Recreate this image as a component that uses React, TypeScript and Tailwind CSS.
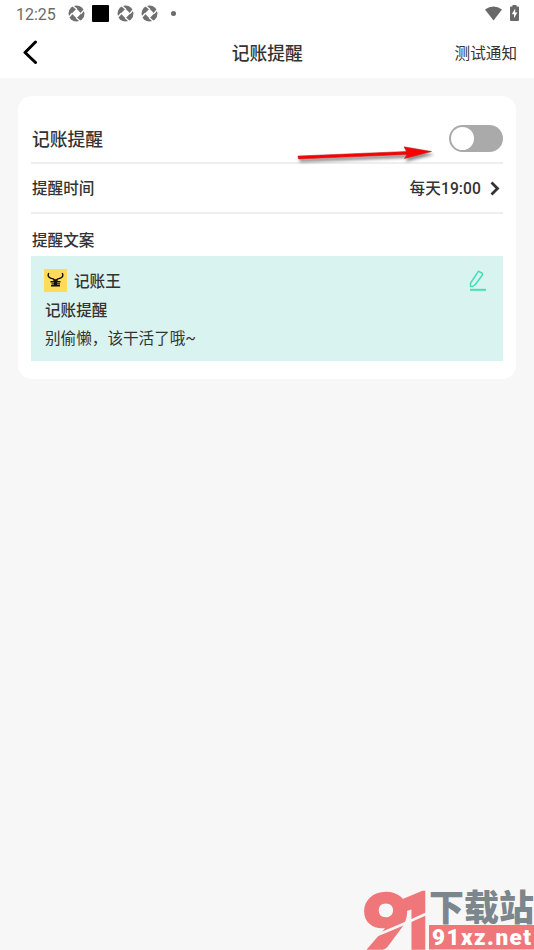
import React from "react";

function ShutterIcon() {
  return (
    <svg width="17" height="17" viewBox="0 0 17 17" className="shrink-0">
      <circle cx="8.5" cy="8.5" r="8" fill="#707070" />
      <path d="M8.500 3.800 13.200 8.500 8.500 13.200 3.800 8.500Z" fill="#fff" />
      <g stroke="#fff" strokeWidth="1.300">
        <path d="M8.800 4.300 5 1" />
        <path d="M12.700 8.800 16 5" />
        <path d="M8.200 12.700 12 16" />
        <path d="M4.300 8.200 1 12" />
      </g>
    </svg>
  );
}

function StatusBar() {
  return (
    <div className="flex h-7 items-center pl-4 pr-[15px]">
      <span className="w-[52px] pt-px font-[Roboto] text-[16px] leading-7 text-[#6b6b6b]">12:25</span>
      <span className="flex w-[17px] translate-y-[-1px]"><ShutterIcon /></span>
      <span className="ml-[7px] h-[17px] w-[17px] translate-y-[-1px] rounded-[1px] bg-black" />
      <span className="ml-2 flex translate-y-[-1px]"><ShutterIcon /></span>
      <span className="ml-[7px] flex translate-y-[-1px]"><ShutterIcon /></span>
      <span className="ml-[13px] h-[5px] w-[5px] translate-y-[-1px] rounded-full bg-[#6b6b6b]" />
      <svg width="17" height="15" viewBox="0 0 17 15" className="ml-auto translate-y-[-1px]">
        <path d="M0 3.500Q8.500-2.500 17 3.500L8.500 14.500Z" fill="#686868" />
      </svg>
      <svg width="9" height="16" viewBox="0 0 9 16" className="ml-2 translate-y-[-1px]">
        <path d="M2.500 1.500V0h4v1.500H8q1 0 1 1V15q0 1-1 1H1q-1 0-1-1V2.500q0-1 1-1Z" fill="#686868" />
        <path d="M5.200 3.500 1.800 9.300h2.200v4L7.300 7.500H5.200Z" fill="#fff" />
      </svg>
    </div>
  );
}

function AppLogo() {
  return (
    <svg width="23" height="23" viewBox="0 0 23 23" className="shrink-0">
      <rect width="23" height="23" fill="#ffdb5a" />
      <path d="M4.800 4C2.800 7.500 5.500 9.200 9 9.800L11.500 11.200 14 9.800C17.500 9.200 20.200 7.500 18.200 4" fill="none" stroke="#111" strokeWidth="1.300" />
      <path d="M9 9.500 11.500 10.700 14 9.500 13.500 12H16.500V13.600H6.500V12H9.500ZM7.500 14.200H16v1.400H7.500ZM7 16.100h9v1.500H7ZM10 12h3v5.500h-3Z" fill="#111" />
    </svg>
  );
}

function PencilIcon() {
  return (
    <svg width="18" height="22" viewBox="0 0 18 22" fill="none" stroke="#43dfb9" strokeWidth="1.500" className="mr-[16px] mt-[14px]">
      <path d="M9.500 1.200 13.500 3.500 13.200 5.300 6.200 14.700 3.500 16.500H1.500L1.600 13Z" strokeLinejoin="round" />
      <path d="M1 19.800H17" strokeWidth="2" />
    </svg>
  );
}

function RedArrow() {
  return (
    <svg width="150" height="30" viewBox="0 0 150 30" className="absolute left-[290px] top-[140px]">
      <defs>
        <filter id="shadow" x="-10%" y="-50%" width="120%" height="220%">
          <feDropShadow dx="1.500" dy="3" stdDeviation="1.500" floodColor="#000" floodOpacity="0.45" />
        </filter>
      </defs>
      <path d="M8 16 116.500 11.500 114 6.800 141.500 11.500 114.500 18.500 117 14.500 8.500 19Z" fill="#fb0505" stroke="#a61b1b" strokeWidth=".5" filter="url(#shadow)" />
    </svg>
  );
}

function SiteMark() {
  return (
    <svg width="171" height="62" viewBox="0 0 171 62" className="absolute bottom-0 right-0">
      <g fill="#ef777a" stroke="#ef777a" strokeWidth="3.500" fontWeight="900">
        <text x="0" y="60" fontSize="75" textLength="46" lengthAdjust="spacingAndGlyphs" fontFamily="Lato, sans-serif">9</text>
        <text x="34" y="60" fontSize="77" textLength="38" lengthAdjust="spacingAndGlyphs" fontFamily="Roboto, sans-serif">1</text>
      </g>
      <path d="M9 49Q30 41 65 25" fill="none" stroke="#f7f7f7" strokeWidth="2.500" />
      <rect x="66" y="37" width="105" height="24.500" fill="#ef777a" />
      <text x="66" y="33" fontSize="36" fontWeight="900" fill="#7b868d" textLength="105" lengthAdjust="spacingAndGlyphs" fontFamily="'Noto Sans CJK SC', sans-serif">下载站</text>
      <text x="69" y="57" fontSize="22.500" fontWeight="900" fill="#fff" textLength="99" fontFamily="Roboto, sans-serif">91xz.net</text>
    </svg>
  );
}

export default function App() {
  return (
    <div className="relative h-[950px] w-[534px] overflow-hidden bg-[#f7f7f7] font-[Roboto,'Noto_Sans_CJK_SC',sans-serif] text-[#333]">
      <header className="h-[78px] bg-white">
        <StatusBar />
        <div className="flex h-[50px] items-center justify-between pl-[22px] pr-[17px]">
          <svg width="58" height="24" viewBox="0 0 58 24" fill="none" stroke="#000" strokeWidth="3" strokeLinecap="round" strokeLinejoin="round" className="-mt-[3px]">
            <path d="M13.500 2 3 12.500 13.500 22.500" />
          </svg>
          <h1 className="pt-[3px] text-center text-[17.800px] font-medium">记账提醒</h1>
          <span className="pt-1 text-right text-[15.600px]">测试通知</span>
        </div>
      </header>
      <main className="mx-[18px] mt-[18px] h-[283px] w-[498px] rounded-[14px] bg-white px-[13px] text-[15.600px] font-medium">
        <div className="flex h-[68px] items-center justify-between border-b-2 border-[#eee] pt-[18px]">
          <span className="pl-px pt-1 text-[17.800px]">记账提醒</span>
          <span className="flex h-[27px] w-[54px] items-center rounded-full bg-[#aaa] pl-0.5">
            <span className="h-[23px] w-[23px] rounded-full bg-white" />
          </span>
        </div>
        <div className="flex h-[50px] items-center justify-between border-b-2 border-[#eee]">
          <span className="pl-px pt-1">提醒时间</span>
          <span className="flex items-center">
            <span className="pt-[3px] tracking-[0.1px]">每天19:00</span>
            <svg width="10" height="15" viewBox="0 0 10 15" fill="none" stroke="#333" strokeWidth="2.800" className="ml-[9px] mr-[3px] mt-px">
              <path d="M1.500 1.500 7.500 7.500 1.500 13.500" />
            </svg>
          </span>
        </div>
        <div className="flex h-[42px] items-center pl-px pt-[13px]">提醒文案</div>
        <section className="flex h-[105px] justify-between bg-[#d9f4f0] pl-[13px]">
          <div className="pt-[13px]">
            <div className="flex h-[23px] items-center gap-[7px]"><AppLogo /><span className="pt-1">记账王</span></div>
            <div className="mt-[5px] h-7 pl-px leading-7">记账提醒</div>
            <div className="h-7 pl-px font-normal leading-7">别偷懒，该干活了哦~</div>
          </div>
          <PencilIcon />
        </section>
      </main>
      <RedArrow />
      <SiteMark />
    </div>
  );
}
